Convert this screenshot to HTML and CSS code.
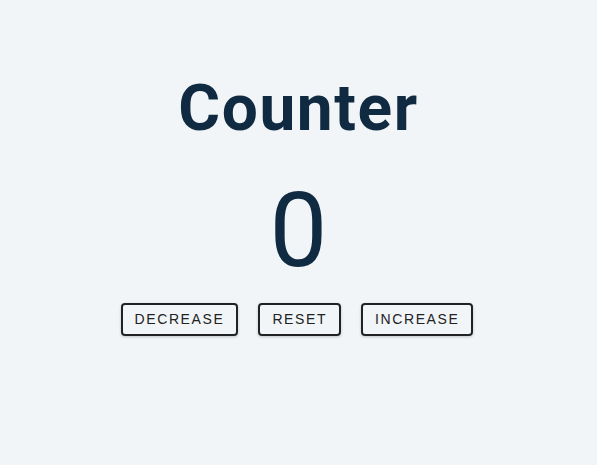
FILE: index.html
```html
<!DOCTYPE html>
<html>
<head>
<meta charset="utf-8">
<link rel="stylesheet" href="styles.css">
</head>
<body>
<main class="main">
  <div class="container">
    <h1 class="title">Counter</h1>
    <span class="value">0</span>
    <div class="buttons">
      <button class="btn">decrease</button>
      <button class="btn">reset</button>
      <button class="btn">increase</button>
    </div>
  </div>
</main>
</body>
</html>
```
FILE: styles.css
```css
* { box-sizing: border-box; }
body {
  margin: 0;
  background: #f1f5f8;
  color: #102a42;
  font-family: Roboto, "Liberation Sans", sans-serif;
}
.main {
  min-height: 100vh;
  display: flex;
  justify-content: center;
  padding-top: 69px;
}
.container {
  text-align: center;
}
.title {
  margin: 0;
  font-size: 64px;
  font-weight: 700;
  line-height: 1.25;
  letter-spacing: 1.6px;
}
.value {
  display: block;
  font-size: 103px;
  line-height: 1.2;
  margin-top: 20px;
}
.buttons {
  display: flex;
  justify-content: center;
  gap: 20px;
  margin-top: 10px;
  margin-right: 3px;
}
.btn {
  text-transform: uppercase;
  background: transparent;
  color: #222;
  padding: 6px 12px 7px;
  letter-spacing: 1.6px;
  font-family: "Liberation Sans", Arial, sans-serif;
  font-size: 14px;
  line-height: normal;
  border: 2px solid #222;
  border-radius: 4px;
  box-shadow: 0 1px 3px rgba(0,0,0,0.2);
  cursor: pointer;
}
```
